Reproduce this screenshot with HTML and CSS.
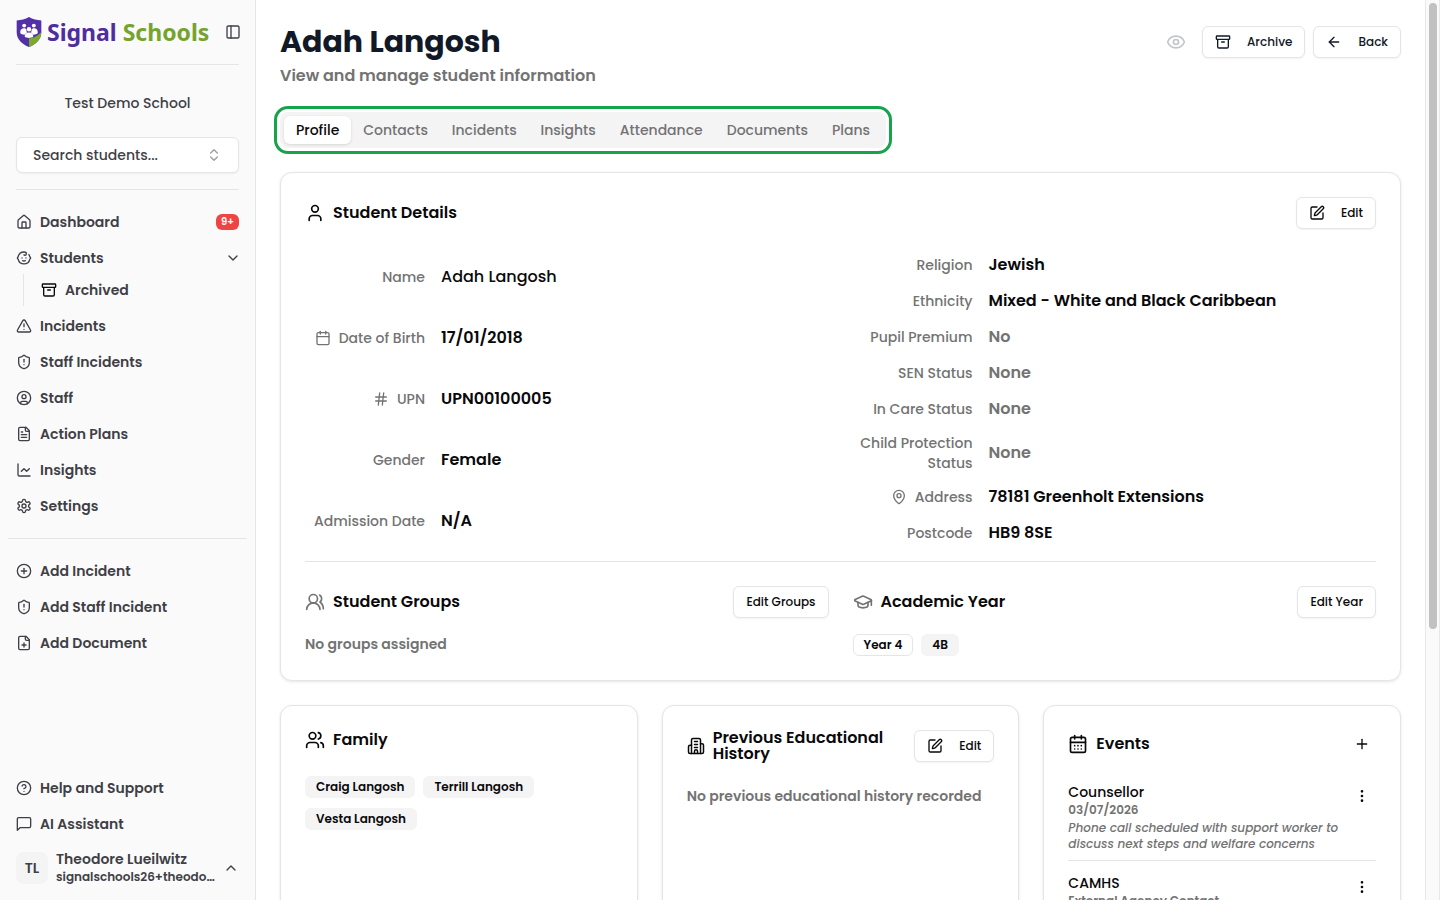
FILE: index.html
```html
<!DOCTYPE html>
<html lang="en">
<head>
<meta charset="utf-8">
<meta name="viewport" content="width=device-width, initial-scale=1">
<title>Adah Langosh - Signal Schools</title>
<link rel="stylesheet" href="styles.css">
</head>
<body>

<!-- icon sprite -->
<svg class="sprite" aria-hidden="true">
    <symbol id="i-panel" viewBox="0 0 24 24"><rect x="3" y="3" width="18" height="18" rx="2"/><path d="M9 3v18"/></symbol>
    <symbol id="i-updown" viewBox="0 0 24 24"><path d="m7 15 5 5 5-5"/><path d="m7 9 5-5 5 5"/></symbol>
    <symbol id="i-down" viewBox="0 0 24 24"><path d="m6 9 6 6 6-6"/></symbol>
    <symbol id="i-up" viewBox="0 0 24 24"><path d="m18 15-6-6-6 6"/></symbol>
    <symbol id="i-house" viewBox="0 0 24 24"><path d="M15 21v-8a1 1 0 0 0-1-1h-4a1 1 0 0 0-1 1v8"/><path d="M3 10a2 2 0 0 1 .709-1.528l7-6a2 2 0 0 1 2.582 0l7 6A2 2 0 0 1 21 10v9a2 2 0 0 1-2 2H5a2 2 0 0 1-2-2z"/></symbol>
    <symbol id="i-baby" viewBox="0 0 24 24"><path d="M10 16c.5.3 1.2.5 2 .5s1.5-.2 2-.5"/><path d="M15 12h.01"/><path d="M9 12h.01"/><path d="M19.38 6.813A9 9 0 0 1 20.8 10.2a2 2 0 0 1 0 3.6 9 9 0 0 1-17.6 0 2 2 0 0 1 0-3.6A9 9 0 0 1 12 3c2 0 3.5 1.1 3.5 2.5s-.9 2.5-2 2.5c-.8 0-1.5-.4-1.5-1"/></symbol>
    <symbol id="i-archive" viewBox="0 0 24 24"><rect x="2" y="3" width="20" height="5" rx="1"/><path d="M4 8v11a2 2 0 0 0 2 2h12a2 2 0 0 0 2-2V8"/><path d="M10 12h4"/></symbol>
    <symbol id="i-alert" viewBox="0 0 24 24"><path d="m21.73 18-8-14a2 2 0 0 0-3.48 0l-8 14A2 2 0 0 0 4 21h16a2 2 0 0 0 1.73-3"/><path d="M12 9v4"/><path d="M12 17h.01"/></symbol>
    <symbol id="i-shield" viewBox="0 0 24 24"><path d="M20 13c0 5-3.500 7.500-7.660 8.950a1 1 0 0 1-.670-.010C7.500 20.500 4 18 4 13V6a1 1 0 0 1 1-1c2 0 4.500-1.200 6.240-2.720a1.170 1.170 0 0 1 1.520 0C14.510 3.810 17 5 19 5a1 1 0 0 1 1 1z"/><path d="M12 8v4"/><path d="M12 16h.01"/></symbol>
    <symbol id="i-user-circle" viewBox="0 0 24 24"><circle cx="12" cy="12" r="10"/><circle cx="12" cy="10" r="3"/><path d="M7 20.662V19a2 2 0 0 1 2-2h6a2 2 0 0 1 2 2v1.662"/></symbol>
    <symbol id="i-file" viewBox="0 0 24 24"><path d="M15 2H6a2 2 0 0 0-2 2v16a2 2 0 0 0 2 2h12a2 2 0 0 0 2-2V7Z"/><path d="M14 2v4a2 2 0 0 0 2 2h4"/><path d="M10 9H8"/><path d="M16 13H8"/><path d="M16 17H8"/></symbol>
    <symbol id="i-chart" viewBox="0 0 24 24"><path d="M3 3v16a2 2 0 0 0 2 2h16"/><path d="m19 9-4 4-4-4-4 4" transform="translate(1 1)"/></symbol>
    <symbol id="i-settings" viewBox="0 0 24 24"><path d="M12.220 2h-.440a2 2 0 0 0-2 2v.180a2 2 0 0 1-1 1.730l-.430.250a2 2 0 0 1-2 0l-.150-.080a2 2 0 0 0-2.730.730l-.220.380a2 2 0 0 0 .730 2.730l.150.100a2 2 0 0 1 1 1.720v.510a2 2 0 0 1-1 1.740l-.150.090a2 2 0 0 0-.730 2.730l.220.380a2 2 0 0 0 2.730.730l.150-.080a2 2 0 0 1 2 0l.430.250a2 2 0 0 1 1 1.730V20a2 2 0 0 0 2 2h.440a2 2 0 0 0 2-2v-.180a2 2 0 0 1 1-1.730l.430-.250a2 2 0 0 1 2 0l.150.080a2 2 0 0 0 2.730-.730l.220-.390a2 2 0 0 0-.730-2.730l-.150-.080a2 2 0 0 1-1-1.740v-.500a2 2 0 0 1 1-1.740l.150-.090a2 2 0 0 0 .730-2.730l-.220-.380a2 2 0 0 0-2.730-.730l-.150.080a2 2 0 0 1-2 0l-.430-.250a2 2 0 0 1-1-1.730V4a2 2 0 0 0-2-2z"/><circle cx="12" cy="12" r="3"/></symbol>
    <symbol id="i-plus-circle" viewBox="0 0 24 24"><circle cx="12" cy="12" r="10"/><path d="M8 12h8"/><path d="M12 8v8"/></symbol>
    <symbol id="i-file-plus" viewBox="0 0 24 24"><path d="M15 2H6a2 2 0 0 0-2 2v16a2 2 0 0 0 2 2h12a2 2 0 0 0 2-2V7Z"/><path d="M14 2v4a2 2 0 0 0 2 2h4"/><path d="M9 15h6"/><path d="M12 18v-6"/></symbol>
    <symbol id="i-help" viewBox="0 0 24 24"><circle cx="12" cy="12" r="10"/><path d="M9.090 9a3 3 0 0 1 5.830 1c0 2-3 3-3 3"/><path d="M12 17h.01"/></symbol>
    <symbol id="i-message" viewBox="0 0 24 24"><path d="M22 4.500v11a2 2 0 0 1-2 2H6l-4 4v-17a2 2 0 0 1 2-2h16a2 2 0 0 1 2 2z"/></symbol>
    <symbol id="i-eye" viewBox="0 0 24 24"><path d="M2.062 12.348a1 1 0 0 1 0-.696 10.750 10.750 0 0 1 19.876 0 1 1 0 0 1 0 .696 10.750 10.750 0 0 1-19.876 0"/><circle cx="12" cy="12" r="3"/></symbol>
    <symbol id="i-arrow" viewBox="0 0 24 24"><path d="m12 19-7-7 7-7"/><path d="M19 12H5"/></symbol>
    <symbol id="i-user" viewBox="0 0 24 24"><path d="M19 21v-2a4 4 0 0 0-4-4H9a4 4 0 0 0-4 4v2"/><circle cx="12" cy="7" r="4"/></symbol>
    <symbol id="i-edit" viewBox="0 0 24 24"><path d="M12 3H5a2 2 0 0 0-2 2v14a2 2 0 0 0 2 2h14a2 2 0 0 0 2-2v-7"/><path d="M18.375 2.625a1 1 0 0 1 3 3l-9.013 9.014a2 2 0 0 1-.853.505l-2.873.840a.5.5 0 0 1-.620-.620l.840-2.873a2 2 0 0 1 .506-.852z"/></symbol>
    <symbol id="i-calendar" viewBox="0 0 24 24"><path d="M8 2v4"/><path d="M16 2v4"/><rect x="3" y="4" width="18" height="18" rx="2"/><path d="M3 10h18"/></symbol>
    <symbol id="i-hash" viewBox="0 0 24 24"><path d="M4 9h16"/><path d="M4 15h16"/><path d="M10 3 8 21"/><path d="m16 3-2 18"/></symbol>
    <symbol id="i-pin" viewBox="0 0 24 24"><path d="M20 10c0 4.993-5.539 10.193-7.399 11.799a1 1 0 0 1-1.202 0C9.539 20.193 4 14.993 4 10a8 8 0 0 1 16 0"/><circle cx="12" cy="10" r="3"/></symbol>
    <symbol id="i-users-round" viewBox="0 0 24 24"><path d="M18 21a8 8 0 0 0-16 0"/><circle cx="10" cy="8" r="5"/><path d="M22 20c0-3.370-2-6.500-4-8a5 5 0 0 0-.450-8.300"/></symbol>
    <symbol id="i-users" viewBox="0 0 24 24"><path d="M16 21v-2a4 4 0 0 0-4-4H6a4 4 0 0 0-4 4v2"/><circle cx="9" cy="7" r="4"/><path d="M22 21v-2a4 4 0 0 0-3-3.870"/><path d="M16 3.130a4 4 0 0 1 0 7.750"/></symbol>
    <symbol id="i-cap" viewBox="0 0 24 24"><path d="M21.420 10.922a1 1 0 0 0-.019-1.838L12.830 5.180a2 2 0 0 0-1.660 0L2.600 9.080a1 1 0 0 0 0 1.832l8.570 3.908a2 2 0 0 0 1.660 0z"/><path d="M22 10v6"/><path d="M6 12.500V16a6 3 0 0 0 12 0v-3.500"/></symbol>
    <symbol id="i-building" viewBox="0 0 24 24"><path d="M6 22V4a2 2 0 0 1 2-2h8a2 2 0 0 1 2 2v18"/><path d="M18 9h2a2 2 0 0 1 2 2v9a2 2 0 0 1-2 2H4a2 2 0 0 1-2-2v-7a2 2 0 0 1 2-2h2"/><path d="M10 6h4"/><path d="M10 10h4"/><path d="M10 14h4"/><path d="M14 22v-3a2 2 0 0 0-4 0v3"/></symbol>
    <symbol id="i-calendar-days" viewBox="0 0 24 24"><path d="M8 2v4"/><path d="M16 2v4"/><rect x="3" y="4" width="18" height="18" rx="2"/><path d="M3 10h18"/><path d="M8 14h.01"/><path d="M12 14h.01"/><path d="M16 14h.01"/><path d="M8 18h.01"/><path d="M12 18h.01"/><path d="M16 18h.01"/></symbol>
    <symbol id="i-plus" viewBox="0 0 24 24"><path d="M5 12h14"/><path d="M12 5v14"/></symbol>
    <symbol id="i-dots" viewBox="0 0 24 24"><circle cx="12" cy="12" r="1"/><circle cx="12" cy="5" r="1"/><circle cx="12" cy="19" r="1"/></symbol>
</svg>

<div class="app">
    <aside class="sidebar">
        <div class="brand">
            <a class="logo" href="#">
                <svg class="logo-mark" viewBox="0 0 24 28" aria-hidden="true">
                    <path d="M12 0c3.500 2 7.500 3 11.500 3.200V14c0 7-5 11.500-11.500 14C5.500 25.500.5 21 .5 14V3.200C4.500 3 8.500 2 12 0z" fill="#5330a8"/>
                    <path d="M23.500 14c0 7-5 11.500-11.500 14v-8c4 0 9-3 11.500-6z" fill="#7aab2c"/>
                    <g fill="#fff"><circle cx="7.500" cy="8" r="1.800"/><circle cx="16.500" cy="8" r="1.800"/><circle cx="12" cy="11.500" r="2.100"/><path d="M3.800 14.500c0-3 1.500-4 3.500-4 1 0 1.800.4 2.200 1.200 0 1.300.3 2 .8 2.500L8 16.500c-2.500 0-4.200-.8-4.200-2zM20.200 14.500c0-3-1.500-4-3.500-4-1 0-1.800.4-2.200 1.200 0 1.300-.3 2-.8 2.500l2.300 2.300c2.500 0 4.200-.8 4.200-2z"/><path d="M8 18.500c0-3 1.500-4 4-4s4 1 4 4c-1.500 1.400-6.500 1.400-8 0z"/></g>
                </svg>
                <span class="logo-text">Signal <span class="logo-green">Schools</span></span>
            </a>
            <button class="icon-btn" type="button" aria-label="Toggle sidebar"><svg class="icon"><use href="#i-panel"/></svg></button>
        </div>
        <p class="school">Test Demo School</p>
        <button class="search" type="button">Search students... <svg class="icon"><use href="#i-updown"/></svg></button>
        <nav class="nav nav-main">
            <a href="#"><svg class="icon"><use href="#i-house"/></svg>Dashboard<span class="count">9+</span></a>
            <a href="#"><svg class="icon"><use href="#i-baby"/></svg>Students<svg class="icon chevron"><use href="#i-down"/></svg></a>
            <div class="subnav">
                <a href="#"><svg class="icon"><use href="#i-archive"/></svg>Archived</a>
            </div>
            <a href="#"><svg class="icon"><use href="#i-alert"/></svg>Incidents</a>
            <a href="#"><svg class="icon"><use href="#i-shield"/></svg>Staff Incidents</a>
            <a href="#"><svg class="icon"><use href="#i-user-circle"/></svg>Staff</a>
            <a href="#"><svg class="icon"><use href="#i-file"/></svg>Action Plans</a>
            <a href="#"><svg class="icon"><use href="#i-chart"/></svg>Insights</a>
            <a href="#"><svg class="icon"><use href="#i-settings"/></svg>Settings</a>
        </nav>
        <nav class="nav nav-add">
            <a href="#"><svg class="icon"><use href="#i-plus-circle"/></svg>Add Incident</a>
            <a href="#"><svg class="icon"><use href="#i-shield"/></svg>Add Staff Incident</a>
            <a href="#"><svg class="icon"><use href="#i-file-plus"/></svg>Add Document</a>
        </nav>
        <nav class="nav nav-foot">
            <a href="#"><svg class="icon"><use href="#i-help"/></svg>Help and Support</a>
            <a href="#"><svg class="icon"><use href="#i-message"/></svg>AI Assistant</a>
        </nav>
        <button class="account" type="button">
            <span class="avatar">TL</span>
            <span class="account-text">
                <span class="account-name">Theodore Lueilwitz</span>
                <span class="account-mail">signalschools26+theodore@example.com</span>
            </span>
            <svg class="icon"><use href="#i-up"/></svg>
        </button>
    </aside>

    <main class="main">
        <header class="page-head">
            <div>
                <h1>Adah Langosh</h1>
                <p class="subtitle">View and manage student information</p>
            </div>
            <div class="actions">
                <button class="icon-btn watch" type="button" aria-label="Watch"><svg class="icon"><use href="#i-eye"/></svg></button>
                <button class="btn" type="button"><svg class="icon"><use href="#i-archive"/></svg>Archive</button>
                <button class="btn" type="button"><svg class="icon"><use href="#i-arrow"/></svg>Back</button>
            </div>
        </header>

        <div class="tabs" role="tablist">
            <button type="button" role="tab" class="active" aria-selected="true">Profile</button>
            <button type="button" role="tab">Contacts</button>
            <button type="button" role="tab">Incidents</button>
            <button type="button" role="tab">Insights</button>
            <button type="button" role="tab">Attendance</button>
            <button type="button" role="tab">Documents</button>
            <button type="button" role="tab">Plans</button>
        </div>

        <section class="card">
            <div class="card-head">
                <h2><svg class="icon"><use href="#i-user"/></svg>Student Details</h2>
                <button class="btn" type="button"><svg class="icon"><use href="#i-edit"/></svg>Edit</button>
            </div>
            <div class="details">
                <dl class="spread">
                    <div><dt>Name</dt><dd class="regular">Adah Langosh</dd></div>
                    <div><dt><svg class="icon"><use href="#i-calendar"/></svg>Date of Birth</dt><dd>17/01/2018</dd></div>
                    <div><dt><svg class="icon"><use href="#i-hash"/></svg>UPN</dt><dd>UPN00100005</dd></div>
                    <div><dt>Gender</dt><dd>Female</dd></div>
                    <div><dt>Admission Date</dt><dd>N/A</dd></div>
                </dl>
                <dl>
                    <div><dt>Religion</dt><dd>Jewish</dd></div>
                    <div><dt>Ethnicity</dt><dd>Mixed - White and Black Caribbean</dd></div>
                    <div><dt>Pupil Premium</dt><dd class="none">No</dd></div>
                    <div><dt>SEN Status</dt><dd class="none">None</dd></div>
                    <div><dt>In Care Status</dt><dd class="none">None</dd></div>
                    <div><dt>Child Protection Status</dt><dd class="none">None</dd></div>
                    <div><dt><svg class="icon"><use href="#i-pin"/></svg>Address</dt><dd>78181 Greenholt Extensions</dd></div>
                    <div><dt>Postcode</dt><dd>HB9 8SE</dd></div>
                </dl>
            </div>
            <div class="groups">
                <div>
                    <div class="group-head">
                        <h3><svg class="icon"><use href="#i-users-round"/></svg>Student Groups</h3>
                        <button class="btn" type="button">Edit Groups</button>
                    </div>
                    <p class="muted">No groups assigned</p>
                </div>
                <div>
                    <div class="group-head">
                        <h3><svg class="icon"><use href="#i-cap"/></svg>Academic Year</h3>
                        <button class="btn" type="button">Edit Year</button>
                    </div>
                    <div class="badges">
                        <span class="badge outline">Year 4</span>
                        <span class="badge">4B</span>
                    </div>
                </div>
            </div>
        </section>

        <div class="cards">
            <section class="card">
                <h2><svg class="icon"><use href="#i-users"/></svg>Family</h2>
                <div class="badges family">
                    <a class="badge" href="#">Craig Langosh</a>
                    <a class="badge" href="#">Terrill Langosh</a>
                    <a class="badge" href="#">Vesta Langosh</a>
                </div>
            </section>
            <section class="card">
                <div class="card-head">
                    <h2><svg class="icon small"><use href="#i-building"/></svg>Previous Educational History</h2>
                    <button class="btn" type="button"><svg class="icon"><use href="#i-edit"/></svg>Edit</button>
                </div>
                <p class="muted">No previous educational history recorded</p>
            </section>
            <section class="card">
                <div class="card-head">
                    <h2><svg class="icon"><use href="#i-calendar-days"/></svg>Events</h2>
                    <button class="icon-btn" type="button" aria-label="Add event"><svg class="icon"><use href="#i-plus"/></svg></button>
                </div>
                <ul class="events">
                    <li>
                        <div>
                            <h4>Counsellor</h4>
                            <p>03/07/2026</p>
                            <p class="note">Phone call scheduled with support worker to discuss next steps and welfare concerns</p>
                        </div>
                        <button class="icon-btn" type="button" aria-label="Event options"><svg class="icon"><use href="#i-dots"/></svg></button>
                    </li>
                    <li>
                        <div>
                            <h4>CAMHS</h4>
                            <p>External Agency Contact</p>
                        </div>
                        <button class="icon-btn" type="button" aria-label="Event options"><svg class="icon"><use href="#i-dots"/></svg></button>
                    </li>
                </ul>
            </section>
        </div>
    </main>
    <div class="scroll-rail" aria-hidden="true"><div class="scroll-thumb"></div></div>
</div>

</body>
</html>
```
FILE: styles.css
```css
* {
    box-sizing: border-box;
    margin: 0;
    padding: 0;
}
body {
    font-family: Poppins, Inter, sans-serif;
    font-size: 14px;
    font-weight: 500;
    line-height: 20px;
    color: #09090b;
    background: #fff;
}
button {
    font: inherit;
    color: inherit;
    background: none;
    border: 0;
    cursor: pointer;
}
a {
    color: inherit;
    text-decoration: none;
}
ul {
    list-style: none;
}
.sprite {
    display: none;
}
.icon {
    width: 16px;
    height: 16px;
    flex: none;
    fill: none;
    stroke: currentColor;
    stroke-width: 2;
    stroke-linecap: round;
    stroke-linejoin: round;
}
.icon-btn {
    display: flex;
    align-items: center;
    justify-content: center;
    flex: none;
    width: 28px;
    height: 28px;
}
.app {
    display: flex;
    height: 100vh;
}

/* sidebar */
.sidebar {
    display: flex;
    flex-direction: column;
    flex: none;
    width: 256px;
    padding: 8px 16px;
    background: #fafafa;
    border-right: 1px solid #e5e5e5;
    color: #3f3f46;
}
.brand {
    display: flex;
    align-items: center;
    justify-content: space-between;
    height: 57px;
    padding-bottom: 8px;
    border-bottom: 1px solid #e5e5e5;
}
.brand .icon-btn {
    width: 16px;
    margin-right: -2px;
}
.logo {
    display: flex;
    align-items: center;
    gap: 5px;
}
.logo-mark {
    width: 26px;
    height: 30px;
}
.logo-text {
    font-family: "Noto Sans", sans-serif;
    font-size: 23px;
    line-height: 32px;
    font-weight: 700;
    color: #4f2d9c;
    white-space: nowrap;
}
.logo-green {
    color: #76a32e;
}
.school {
    padding: 28px 0 24px;
    text-align: center;
}
.search {
    display: flex;
    align-items: center;
    justify-content: space-between;
    flex: none;
    height: 36px;
    padding: 0 16px;
    background: #fff;
    border: 1px solid #e5e5e5;
    border-radius: 6px;
    box-shadow: 0 1px 2px rgba(0, 0, 0, .05);
}
.search .icon {
    opacity: .5;
}
.nav {
    display: flex;
    flex-direction: column;
    gap: 4px;
    font-weight: 600;
}
.nav a {
    display: flex;
    align-items: center;
    gap: 8px;
    height: 32px;
}
.nav-main {
    margin-top: 16px;
    padding-top: 16px;
    border-top: 1px solid #e5e5e5;
}
.nav .subnav {
    margin: -4px 0 0 7px;
    padding-left: 17px;
    border-left: 1px solid #e5e5e5;
}
.subnav .icon {
    color: #09090b;
}
.nav .chevron {
    margin-left: auto;
    margin-right: -2px;
}
.count {
    margin-left: auto;
    padding: 0 5px;
    font-size: 10px;
    line-height: 16px;
    color: #fff;
    background: #ef4444;
    border-radius: 6px;
}
.nav-add {
    margin: 16px -8px 0;
    padding: 16px 8px 0;
    border-top: 1px solid #e5e5e5;
}
.nav-foot {
    margin-top: auto;
}
.account {
    display: flex;
    align-items: center;
    gap: 8px;
    height: 48px;
    margin-top: 4px;
    text-align: left;
    font-weight: 600;
}
.avatar {
    flex: none;
    width: 32px;
    line-height: 32px;
    text-align: center;
    background: #f4f4f5;
    border-radius: 8px;
}
.account-text {
    flex: 1;
    min-width: 0;
}
.account-name,
.account-mail {
    display: block;
    line-height: 18px;
    overflow: hidden;
    text-overflow: ellipsis;
    white-space: nowrap;
}
.account-mail {
    font-size: 12px;
}

/* page */
.main {
    flex: 1;
    min-width: 0;
    padding: 24px;
    overflow-y: auto;
    scrollbar-width: none;
}
.scroll-rail {
    flex: none;
    width: 15px;
    padding: 3px;
    background: #fafafa;
    border: solid #e8e8e8;
    border-width: 0 1px;
}
.scroll-thumb {
    width: 8px;
    height: 70%;
    background: #c1c1c1;
    border-radius: 4px;
}
.page-head {
    display: flex;
    justify-content: space-between;
}
h1 {
    font-size: 30px;
    line-height: 36px;
    font-weight: 700;
    color: #111827;
}
.subtitle {
    margin-top: 4px;
    font-size: 16px;
    line-height: 24px;
    font-weight: 600;
    color: #737373;
}
.actions {
    display: flex;
    gap: 8px;
    margin-top: 2px;
    color: #111827;
}
.watch {
    width: 36px;
    height: 32px;
    opacity: .25;
}
.watch .icon {
    width: 20px;
    height: 20px;
}
.btn {
    display: flex;
    align-items: center;
    gap: 16px;
    flex: none;
    height: 32px;
    padding: 0 12px;
    font-size: 12px;
    background: #fff;
    border: 1px solid #e5e5e5;
    border-radius: 6px;
    box-shadow: 0 1px 2px rgba(0, 0, 0, .05);
}
.tabs {
    display: flex;
    width: 606px;
    max-width: 100%;
    height: 36px;
    margin-top: 24px;
    padding: 4px;
    background: #f4f4f5;
    border-radius: 8px;
    color: #737373;
    outline: 3px solid #16a34a;
    outline-offset: 3px;
}
.tabs button {
    flex: 1 1 auto;
    padding: 0 8px;
    border-radius: 6px;
}
.tabs .active {
    color: #09090b;
    background: #fff;
    box-shadow: 0 1px 3px rgba(0, 0, 0, .12);
}
.card {
    padding: 24px;
    background: #fff;
    border: 1px solid #e5e5e5;
    border-radius: 12px;
    box-shadow: 0 1px 3px rgba(0, 0, 0, .1);
}
.main > .card {
    margin-top: 24px;
}
.card-head,
.group-head {
    display: flex;
    align-items: center;
    justify-content: space-between;
    gap: 16px;
}
h2,
h3 {
    display: flex;
    align-items: center;
    gap: 8px;
    font-size: 16px;
    line-height: 16px;
    font-weight: 600;
}
h2 .icon,
h3 .icon {
    width: 20px;
    height: 20px;
}
h2 .small {
    width: 18px;
}
h3 .icon {
    color: #737373;
}
.details,
.groups {
    display: grid;
    grid-template-columns: 1fr 1fr;
    gap: 24px;
}
.details {
    padding: 24px 0 16px;
    border-bottom: 1px solid #e5e5e5;
}
dl {
    display: grid;
    gap: 12px;
}
.spread {
    grid-auto-rows: 1fr;
}
dl div {
    display: grid;
    grid-template-columns: 120px 1fr;
    align-items: center;
    gap: 16px;
}
dt {
    display: flex;
    align-items: center;
    justify-content: flex-end;
    gap: 8px;
    text-align: right;
    color: #737373;
}
dd {
    font-size: 16px;
    line-height: 24px;
    font-weight: 600;
}
.regular {
    font-weight: 500;
}
.none,
.muted {
    color: #737373;
}
.muted {
    margin-top: 16px;
    font-weight: 600;
}
.groups {
    padding-top: 24px;
}
.badges {
    display: flex;
    flex-wrap: wrap;
    gap: 10px 8px;
    margin-top: 16px;
}
.badge {
    padding: 0 10px;
    font-size: 12px;
    line-height: 20px;
    font-weight: 600;
    background: #f4f4f5;
    border: 1px solid #f4f4f5;
    border-radius: 6px;
}
.outline {
    background: #fff;
    border-color: #e5e5e5;
}
.cards {
    display: grid;
    grid-template-columns: repeat(3, 1fr);
    gap: 24px;
    margin-top: 24px;
}
.cards .card {
    min-height: 556px;
}
.cards .muted,
.events {
    margin-top: 24px;
}
.cards .family {
    margin-top: 26px;
}
.events li {
    display: flex;
    justify-content: space-between;
    gap: 8px;
    padding-bottom: 8px;
    border-bottom: 1px solid #e5e5e5;
}
.events li + li {
    padding-top: 12px;
}
h4 {
    font-size: 14px;
    line-height: 20px;
    font-weight: 500;
}
.events p {
    font-size: 12px;
    line-height: 16px;
    font-weight: 600;
    color: #737373;
}
.events .note {
    margin-top: 2px;
    font-weight: 500;
    font-style: italic;
}
```
